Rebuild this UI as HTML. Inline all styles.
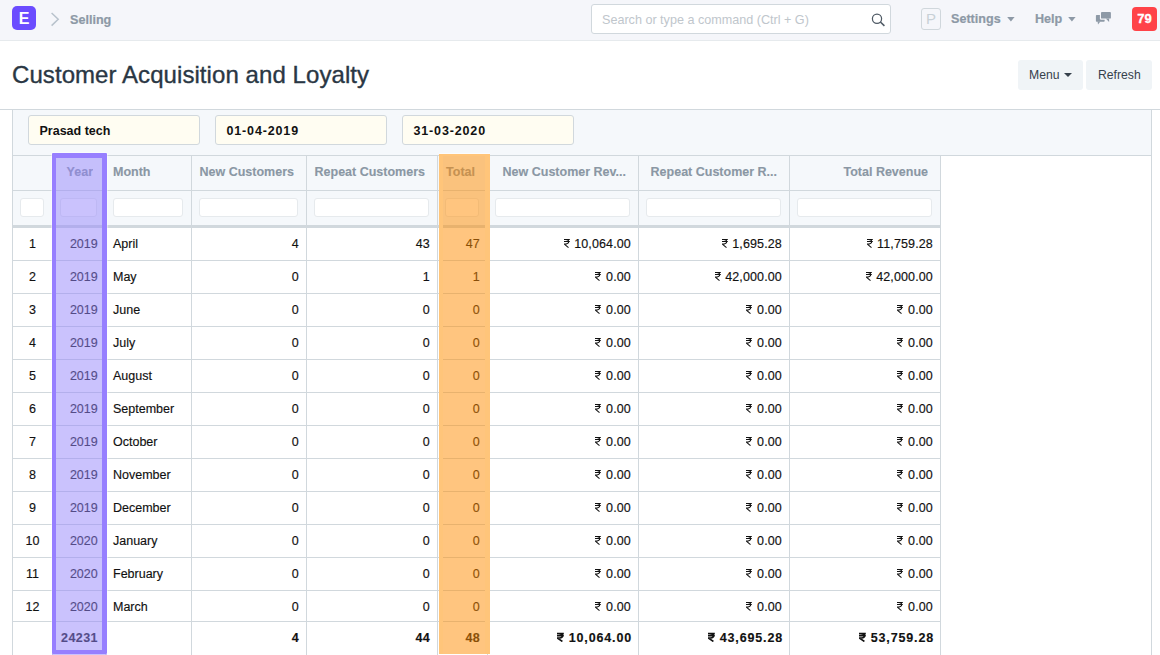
<!DOCTYPE html>
<html><head><meta charset="utf-8">
<style>
*{box-sizing:border-box;margin:0;padding:0}
html,body{width:1160px;height:655px;overflow:hidden;background:#fff;font-family:"Liberation Sans",sans-serif;}
.abs{position:absolute}
#nav{position:absolute;left:0;top:0;width:1160px;height:41px;background:#f5f6fa;border-bottom:1px solid #e6eaed}
#logo{left:12px;top:6px;width:24px;height:24px;border-radius:5px;background:#6b4cff;color:#fff;font-weight:bold;font-size:16px;line-height:25px;text-align:center}
.navtxt{font-weight:bold;font-size:12.6px;color:#8d99a6;white-space:nowrap;-webkit-text-stroke:0.2px #8d99a6}
#search{left:591px;top:4px;width:300px;height:30px;border:1px solid #d1d8dd;border-radius:3px;background:#fff}
#search span{position:absolute;left:10px;top:8px;font-size:12.6px;color:#c0c6cc;white-space:nowrap}
#pav{left:921px;top:8px;width:20px;height:22px;border:1px solid #d0d7dc;border-radius:3px;color:#c8d0d6;font-size:15px;line-height:20px;text-align:center}
#badge{left:1132px;top:7px;width:25px;height:24px;border-radius:4px;background:#ff4348;color:#fff;font-weight:bold;font-size:13px;line-height:23px;text-align:center;-webkit-text-stroke:0.3px #fff}
#title{left:12px;top:61px;font-size:24px;letter-spacing:0px;-webkit-text-stroke:0.35px #2a3744;letter-spacing:0.07px;color:#2a3744;white-space:nowrap;line-height:28px}
.btn{top:60px;height:30px;background:#f0f4f7;border-radius:3px;font-size:12.2px;color:#36414c;line-height:30px;white-space:nowrap}
#hline{left:0;top:109px;width:1160px;height:1px;background:#d1d8dd}
#filt{left:12px;top:110px;width:1140px;height:46px;background:#f5f8fb;border-left:1px solid #d1d8dd;border-right:1px solid #d1d8dd}
.fin{top:115px;width:172px;height:30px;border:1px solid #d1d8dd;border-radius:3px;background:#fffdf2;font-weight:bold;font-size:12.5px;color:#111;padding-left:10.5px;line-height:30px;white-space:nowrap}
#rb{left:1151px;top:110px;width:1px;height:545px;background:#d1d8dd}

.c{position:absolute}
.h{position:absolute;height:34px;line-height:32px;font-weight:bold;font-size:12.5px;color:#8a97a4;white-space:nowrap;overflow:hidden;-webkit-text-stroke:0.12px #8a97a4}
.fi{position:absolute;top:198px;height:19px;background:#fff;border:1px solid #e6eaed;border-radius:3px}
.t{position:absolute;height:32px;line-height:32px;font-size:12.5px;color:#111;white-space:nowrap;-webkit-text-stroke:0.15px currentColor}
.t.b{font-weight:bold}
.ru{display:inline-block;vertical-align:baseline;position:relative;top:0px}
#purp{left:52px;top:153px;width:55px;height:501px;border:5px solid #977fff;border-left-width:4px;border-bottom-width:4px;border-radius:1px;background:rgba(150,133,252,0.5);box-shadow:0 0 0 1px rgba(255,255,255,0.45)}
#purp2{left:52px;top:654px;width:55px;height:2px;background:rgba(150,133,252,0.5)}
#orng{left:439px;top:154px;width:51px;height:500px;border:4px solid #ffc57a;border-right-width:5px;border-top-width:2px;border-bottom:0;background:rgba(255,139,0,0.5);box-shadow:0 -1px 0 0 rgba(255,255,255,0.6)}
</style></head><body>
<div id="nav"></div>
<div id="logo" class="abs">E</div>
<svg class="abs" style="left:50px;top:12px" width="12" height="16" viewBox="0 0 12 16"><path d="M1.6 1 L8.2 7.3 L1.6 13.6" fill="none" stroke="#b8c2cc" stroke-width="1.5"/></svg>
<div class="abs navtxt" style="left:70px;top:13px">Selling</div>
<div id="search" class="abs"><span>Search or type a command (Ctrl + G)</span>
<svg style="position:absolute;left:279px;top:7px" width="16" height="16" viewBox="0 0 16 16"><circle cx="6" cy="6.7" r="4.6" fill="none" stroke="#4f5a65" stroke-width="1.25"/><path d="M9.4 10 L13.4 13.8" stroke="#4f5a65" stroke-width="1.6"/></svg></div>
<div id="pav" class="abs">P</div>
<div class="abs navtxt" style="left:951px;top:12px">Settings</div>
<svg class="abs" style="left:1007px;top:16.5px" width="8" height="5"><path d="M0.2 0 L7.6 0 L3.9 4.4Z" fill="#8d99a6"/></svg>
<div class="abs navtxt" style="left:1035px;top:12px">Help</div>
<svg class="abs" style="left:1068px;top:16.5px" width="8" height="5"><path d="M0.2 0 L7.6 0 L3.9 4.4Z" fill="#8d99a6"/></svg>
<svg class="abs" style="left:1094px;top:10px" width="18" height="16" viewBox="0 0 18 16"><rect x="1.9" y="5" width="8.75" height="6.75" rx="0.8" fill="#8d99a6"/><path d="M3.6 11.5 L6.4 11.5 L4 14.4Z" fill="#8d99a6"/><rect x="5.9" y="0.9" width="12.1" height="8.8" rx="1.2" fill="#f5f6fa"/><path d="M10.8 8.8 L16 8.8 L16 12.8Z" fill="#f5f6fa"/><rect x="7" y="2" width="9.9" height="6.6" rx="0.9" fill="#8d99a6"/><path d="M11.8 8.5 L15.1 8.5 L15.1 11.9Z" fill="#8d99a6"/></svg>
<div id="badge" class="abs">79</div>

<div id="title" class="abs">Customer Acquisition and Loyalty</div>
<div class="abs btn" style="left:1018px;width:65px;padding-left:11px">Menu</div>
<svg class="abs" style="left:1064px;top:73px" width="8" height="4"><path d="M0 0 L8 0 L4 4Z" fill="#36414c"/></svg>
<div class="abs btn" style="left:1086px;width:66px;padding-left:12px">Refresh</div>

<div id="hline" class="abs"></div>
<div id="filt" class="abs"></div>
<div class="abs fin" style="left:28px">Prasad tech</div>
<div class="abs fin" style="left:215px;letter-spacing:0.85px">01-04-2019</div>
<div class="abs fin" style="left:402px;letter-spacing:0.85px">31-03-2020</div>
<div id="rb" class="abs"></div>

<div class="abs" style="left:12px;top:155px;width:1140px;height:1px;background:#d1d8dd"></div>
<div class="abs" style="left:13px;top:156px;width:927px;height:69px;background:#f5f8fb"></div>
<div class="abs" style="left:12px;top:190px;width:928px;height:1px;background:#d1d8dd"></div>
<div class="abs" style="left:12px;top:225px;width:928px;height:3px;background:#d1d8dd"></div>
<div class="abs" style="left:12px;top:156px;width:1px;height:499px;background:#d1d8dd"></div>
<div class="abs" style="left:52px;top:156px;width:1px;height:499px;background:#d1d8dd"></div>
<div class="abs" style="left:105px;top:156px;width:1px;height:499px;background:#d1d8dd"></div>
<div class="abs" style="left:191px;top:156px;width:1px;height:499px;background:#d1d8dd"></div>
<div class="abs" style="left:306px;top:156px;width:1px;height:499px;background:#d1d8dd"></div>
<div class="abs" style="left:437px;top:156px;width:1px;height:499px;background:#d1d8dd"></div>
<div class="abs" style="left:487px;top:156px;width:1px;height:499px;background:#d1d8dd"></div>
<div class="abs" style="left:638px;top:156px;width:1px;height:499px;background:#d1d8dd"></div>
<div class="abs" style="left:789px;top:156px;width:1px;height:499px;background:#d1d8dd"></div>
<div class="abs" style="left:940px;top:156px;width:1px;height:499px;background:#d1d8dd"></div>
<div class="abs" style="left:12px;top:260px;width:928px;height:1px;background:#d1d8dd"></div>
<div class="abs" style="left:12px;top:293px;width:928px;height:1px;background:#d1d8dd"></div>
<div class="abs" style="left:12px;top:326px;width:928px;height:1px;background:#d1d8dd"></div>
<div class="abs" style="left:12px;top:359px;width:928px;height:1px;background:#d1d8dd"></div>
<div class="abs" style="left:12px;top:392px;width:928px;height:1px;background:#d1d8dd"></div>
<div class="abs" style="left:12px;top:425px;width:928px;height:1px;background:#d1d8dd"></div>
<div class="abs" style="left:12px;top:458px;width:928px;height:1px;background:#d1d8dd"></div>
<div class="abs" style="left:12px;top:491px;width:928px;height:1px;background:#d1d8dd"></div>
<div class="abs" style="left:12px;top:524px;width:928px;height:1px;background:#d1d8dd"></div>
<div class="abs" style="left:12px;top:557px;width:928px;height:1px;background:#d1d8dd"></div>
<div class="abs" style="left:12px;top:590px;width:928px;height:1px;background:#d1d8dd"></div>
<div class="abs" style="left:12px;top:621px;width:928px;height:1px;background:#d1d8dd"></div>
<div class="h" style="left:60px;top:156px;width:33px;text-align:right">Year</div>
<div class="h" style="left:113px;top:156px;width:78px;text-align:left">Month</div>
<div class="h" style="left:199px;top:156px;width:95px;text-align:right">New Customers</div>
<div class="h" style="left:314px;top:156px;width:111px;text-align:right">Repeat Customers</div>
<div class="h" style="left:445px;top:156px;width:30px;text-align:right">Total</div>
<div class="h" style="left:495px;top:156px;width:131px;text-align:right">New Customer Rev...</div>
<div class="h" style="left:646px;top:156px;width:131px;text-align:right">Repeat Customer R...</div>
<div class="h" style="left:797px;top:156px;width:131px;text-align:right">Total Revenue</div>
<div class="fi" style="left:20px;width:24px"></div>
<div class="fi" style="left:60px;width:37px"></div>
<div class="fi" style="left:113px;width:70px"></div>
<div class="fi" style="left:199px;width:99px"></div>
<div class="fi" style="left:314px;width:115px"></div>
<div class="fi" style="left:445px;width:34px"></div>
<div class="fi" style="left:495px;width:135px"></div>
<div class="fi" style="left:646px;width:135px"></div>
<div class="fi" style="left:797px;width:135px"></div>
<div class="t" style="left:13px;top:228px;width:39px;text-align:center">1</div>
<div class="t" style="left:60px;top:228px;width:37.7px;text-align:right">2019</div>
<div class="t" style="left:113px;top:228px;width:70px;text-align:left">April</div>
<div class="t" style="left:199px;top:228px;width:99.7px;text-align:right">4</div>
<div class="t" style="left:314px;top:228px;width:115.7px;text-align:right">43</div>
<div class="t" style="left:445px;top:228px;width:34.7px;text-align:right">47</div>
<div class="t" style="left:495px;top:228px;width:135.9px;text-align:right;letter-spacing:0.12px"><svg class="ru" width="7" height="10" viewBox="0 0 7 10"><path d="M0 1.5H5.8M0 3.5H5.8M1.8 1.5Q4.7 1.5 4.7 3.8Q4.7 6.1 0.3 6.1L4.5 9.6" fill="none" stroke="currentColor" stroke-width="1.05"/></svg>&nbsp;10,064.00</div>
<div class="t" style="left:646px;top:228px;width:135.9px;text-align:right;letter-spacing:0.12px"><svg class="ru" width="7" height="10" viewBox="0 0 7 10"><path d="M0 1.5H5.8M0 3.5H5.8M1.8 1.5Q4.7 1.5 4.7 3.8Q4.7 6.1 0.3 6.1L4.5 9.6" fill="none" stroke="currentColor" stroke-width="1.05"/></svg>&nbsp;1,695.28</div>
<div class="t" style="left:797px;top:228px;width:135.9px;text-align:right;letter-spacing:0.12px"><svg class="ru" width="7" height="10" viewBox="0 0 7 10"><path d="M0 1.5H5.8M0 3.5H5.8M1.8 1.5Q4.7 1.5 4.7 3.8Q4.7 6.1 0.3 6.1L4.5 9.6" fill="none" stroke="currentColor" stroke-width="1.05"/></svg>&nbsp;11,759.28</div>
<div class="t" style="left:13px;top:261px;width:39px;text-align:center">2</div>
<div class="t" style="left:60px;top:261px;width:37.7px;text-align:right">2019</div>
<div class="t" style="left:113px;top:261px;width:70px;text-align:left">May</div>
<div class="t" style="left:199px;top:261px;width:99.7px;text-align:right">0</div>
<div class="t" style="left:314px;top:261px;width:115.7px;text-align:right">1</div>
<div class="t" style="left:445px;top:261px;width:34.7px;text-align:right">1</div>
<div class="t" style="left:495px;top:261px;width:135.9px;text-align:right;letter-spacing:0.12px"><svg class="ru" width="7" height="10" viewBox="0 0 7 10"><path d="M0 1.5H5.8M0 3.5H5.8M1.8 1.5Q4.7 1.5 4.7 3.8Q4.7 6.1 0.3 6.1L4.5 9.6" fill="none" stroke="currentColor" stroke-width="1.05"/></svg>&nbsp;0.00</div>
<div class="t" style="left:646px;top:261px;width:135.9px;text-align:right;letter-spacing:0.12px"><svg class="ru" width="7" height="10" viewBox="0 0 7 10"><path d="M0 1.5H5.8M0 3.5H5.8M1.8 1.5Q4.7 1.5 4.7 3.8Q4.7 6.1 0.3 6.1L4.5 9.6" fill="none" stroke="currentColor" stroke-width="1.05"/></svg>&nbsp;42,000.00</div>
<div class="t" style="left:797px;top:261px;width:135.9px;text-align:right;letter-spacing:0.12px"><svg class="ru" width="7" height="10" viewBox="0 0 7 10"><path d="M0 1.5H5.8M0 3.5H5.8M1.8 1.5Q4.7 1.5 4.7 3.8Q4.7 6.1 0.3 6.1L4.5 9.6" fill="none" stroke="currentColor" stroke-width="1.05"/></svg>&nbsp;42,000.00</div>
<div class="t" style="left:13px;top:294px;width:39px;text-align:center">3</div>
<div class="t" style="left:60px;top:294px;width:37.7px;text-align:right">2019</div>
<div class="t" style="left:113px;top:294px;width:70px;text-align:left">June</div>
<div class="t" style="left:199px;top:294px;width:99.7px;text-align:right">0</div>
<div class="t" style="left:314px;top:294px;width:115.7px;text-align:right">0</div>
<div class="t" style="left:445px;top:294px;width:34.7px;text-align:right">0</div>
<div class="t" style="left:495px;top:294px;width:135.9px;text-align:right;letter-spacing:0.12px"><svg class="ru" width="7" height="10" viewBox="0 0 7 10"><path d="M0 1.5H5.8M0 3.5H5.8M1.8 1.5Q4.7 1.5 4.7 3.8Q4.7 6.1 0.3 6.1L4.5 9.6" fill="none" stroke="currentColor" stroke-width="1.05"/></svg>&nbsp;0.00</div>
<div class="t" style="left:646px;top:294px;width:135.9px;text-align:right;letter-spacing:0.12px"><svg class="ru" width="7" height="10" viewBox="0 0 7 10"><path d="M0 1.5H5.8M0 3.5H5.8M1.8 1.5Q4.7 1.5 4.7 3.8Q4.7 6.1 0.3 6.1L4.5 9.6" fill="none" stroke="currentColor" stroke-width="1.05"/></svg>&nbsp;0.00</div>
<div class="t" style="left:797px;top:294px;width:135.9px;text-align:right;letter-spacing:0.12px"><svg class="ru" width="7" height="10" viewBox="0 0 7 10"><path d="M0 1.5H5.8M0 3.5H5.8M1.8 1.5Q4.7 1.5 4.7 3.8Q4.7 6.1 0.3 6.1L4.5 9.6" fill="none" stroke="currentColor" stroke-width="1.05"/></svg>&nbsp;0.00</div>
<div class="t" style="left:13px;top:327px;width:39px;text-align:center">4</div>
<div class="t" style="left:60px;top:327px;width:37.7px;text-align:right">2019</div>
<div class="t" style="left:113px;top:327px;width:70px;text-align:left">July</div>
<div class="t" style="left:199px;top:327px;width:99.7px;text-align:right">0</div>
<div class="t" style="left:314px;top:327px;width:115.7px;text-align:right">0</div>
<div class="t" style="left:445px;top:327px;width:34.7px;text-align:right">0</div>
<div class="t" style="left:495px;top:327px;width:135.9px;text-align:right;letter-spacing:0.12px"><svg class="ru" width="7" height="10" viewBox="0 0 7 10"><path d="M0 1.5H5.8M0 3.5H5.8M1.8 1.5Q4.7 1.5 4.7 3.8Q4.7 6.1 0.3 6.1L4.5 9.6" fill="none" stroke="currentColor" stroke-width="1.05"/></svg>&nbsp;0.00</div>
<div class="t" style="left:646px;top:327px;width:135.9px;text-align:right;letter-spacing:0.12px"><svg class="ru" width="7" height="10" viewBox="0 0 7 10"><path d="M0 1.5H5.8M0 3.5H5.8M1.8 1.5Q4.7 1.5 4.7 3.8Q4.7 6.1 0.3 6.1L4.5 9.6" fill="none" stroke="currentColor" stroke-width="1.05"/></svg>&nbsp;0.00</div>
<div class="t" style="left:797px;top:327px;width:135.9px;text-align:right;letter-spacing:0.12px"><svg class="ru" width="7" height="10" viewBox="0 0 7 10"><path d="M0 1.5H5.8M0 3.5H5.8M1.8 1.5Q4.7 1.5 4.7 3.8Q4.7 6.1 0.3 6.1L4.5 9.6" fill="none" stroke="currentColor" stroke-width="1.05"/></svg>&nbsp;0.00</div>
<div class="t" style="left:13px;top:360px;width:39px;text-align:center">5</div>
<div class="t" style="left:60px;top:360px;width:37.7px;text-align:right">2019</div>
<div class="t" style="left:113px;top:360px;width:70px;text-align:left">August</div>
<div class="t" style="left:199px;top:360px;width:99.7px;text-align:right">0</div>
<div class="t" style="left:314px;top:360px;width:115.7px;text-align:right">0</div>
<div class="t" style="left:445px;top:360px;width:34.7px;text-align:right">0</div>
<div class="t" style="left:495px;top:360px;width:135.9px;text-align:right;letter-spacing:0.12px"><svg class="ru" width="7" height="10" viewBox="0 0 7 10"><path d="M0 1.5H5.8M0 3.5H5.8M1.8 1.5Q4.7 1.5 4.7 3.8Q4.7 6.1 0.3 6.1L4.5 9.6" fill="none" stroke="currentColor" stroke-width="1.05"/></svg>&nbsp;0.00</div>
<div class="t" style="left:646px;top:360px;width:135.9px;text-align:right;letter-spacing:0.12px"><svg class="ru" width="7" height="10" viewBox="0 0 7 10"><path d="M0 1.5H5.8M0 3.5H5.8M1.8 1.5Q4.7 1.5 4.7 3.8Q4.7 6.1 0.3 6.1L4.5 9.6" fill="none" stroke="currentColor" stroke-width="1.05"/></svg>&nbsp;0.00</div>
<div class="t" style="left:797px;top:360px;width:135.9px;text-align:right;letter-spacing:0.12px"><svg class="ru" width="7" height="10" viewBox="0 0 7 10"><path d="M0 1.5H5.8M0 3.5H5.8M1.8 1.5Q4.7 1.5 4.7 3.8Q4.7 6.1 0.3 6.1L4.5 9.6" fill="none" stroke="currentColor" stroke-width="1.05"/></svg>&nbsp;0.00</div>
<div class="t" style="left:13px;top:393px;width:39px;text-align:center">6</div>
<div class="t" style="left:60px;top:393px;width:37.7px;text-align:right">2019</div>
<div class="t" style="left:113px;top:393px;width:70px;text-align:left">September</div>
<div class="t" style="left:199px;top:393px;width:99.7px;text-align:right">0</div>
<div class="t" style="left:314px;top:393px;width:115.7px;text-align:right">0</div>
<div class="t" style="left:445px;top:393px;width:34.7px;text-align:right">0</div>
<div class="t" style="left:495px;top:393px;width:135.9px;text-align:right;letter-spacing:0.12px"><svg class="ru" width="7" height="10" viewBox="0 0 7 10"><path d="M0 1.5H5.8M0 3.5H5.8M1.8 1.5Q4.7 1.5 4.7 3.8Q4.7 6.1 0.3 6.1L4.5 9.6" fill="none" stroke="currentColor" stroke-width="1.05"/></svg>&nbsp;0.00</div>
<div class="t" style="left:646px;top:393px;width:135.9px;text-align:right;letter-spacing:0.12px"><svg class="ru" width="7" height="10" viewBox="0 0 7 10"><path d="M0 1.5H5.8M0 3.5H5.8M1.8 1.5Q4.7 1.5 4.7 3.8Q4.7 6.1 0.3 6.1L4.5 9.6" fill="none" stroke="currentColor" stroke-width="1.05"/></svg>&nbsp;0.00</div>
<div class="t" style="left:797px;top:393px;width:135.9px;text-align:right;letter-spacing:0.12px"><svg class="ru" width="7" height="10" viewBox="0 0 7 10"><path d="M0 1.5H5.8M0 3.5H5.8M1.8 1.5Q4.7 1.5 4.7 3.8Q4.7 6.1 0.3 6.1L4.5 9.6" fill="none" stroke="currentColor" stroke-width="1.05"/></svg>&nbsp;0.00</div>
<div class="t" style="left:13px;top:426px;width:39px;text-align:center">7</div>
<div class="t" style="left:60px;top:426px;width:37.7px;text-align:right">2019</div>
<div class="t" style="left:113px;top:426px;width:70px;text-align:left">October</div>
<div class="t" style="left:199px;top:426px;width:99.7px;text-align:right">0</div>
<div class="t" style="left:314px;top:426px;width:115.7px;text-align:right">0</div>
<div class="t" style="left:445px;top:426px;width:34.7px;text-align:right">0</div>
<div class="t" style="left:495px;top:426px;width:135.9px;text-align:right;letter-spacing:0.12px"><svg class="ru" width="7" height="10" viewBox="0 0 7 10"><path d="M0 1.5H5.8M0 3.5H5.8M1.8 1.5Q4.7 1.5 4.7 3.8Q4.7 6.1 0.3 6.1L4.5 9.6" fill="none" stroke="currentColor" stroke-width="1.05"/></svg>&nbsp;0.00</div>
<div class="t" style="left:646px;top:426px;width:135.9px;text-align:right;letter-spacing:0.12px"><svg class="ru" width="7" height="10" viewBox="0 0 7 10"><path d="M0 1.5H5.8M0 3.5H5.8M1.8 1.5Q4.7 1.5 4.7 3.8Q4.7 6.1 0.3 6.1L4.5 9.6" fill="none" stroke="currentColor" stroke-width="1.05"/></svg>&nbsp;0.00</div>
<div class="t" style="left:797px;top:426px;width:135.9px;text-align:right;letter-spacing:0.12px"><svg class="ru" width="7" height="10" viewBox="0 0 7 10"><path d="M0 1.5H5.8M0 3.5H5.8M1.8 1.5Q4.7 1.5 4.7 3.8Q4.7 6.1 0.3 6.1L4.5 9.6" fill="none" stroke="currentColor" stroke-width="1.05"/></svg>&nbsp;0.00</div>
<div class="t" style="left:13px;top:459px;width:39px;text-align:center">8</div>
<div class="t" style="left:60px;top:459px;width:37.7px;text-align:right">2019</div>
<div class="t" style="left:113px;top:459px;width:70px;text-align:left">November</div>
<div class="t" style="left:199px;top:459px;width:99.7px;text-align:right">0</div>
<div class="t" style="left:314px;top:459px;width:115.7px;text-align:right">0</div>
<div class="t" style="left:445px;top:459px;width:34.7px;text-align:right">0</div>
<div class="t" style="left:495px;top:459px;width:135.9px;text-align:right;letter-spacing:0.12px"><svg class="ru" width="7" height="10" viewBox="0 0 7 10"><path d="M0 1.5H5.8M0 3.5H5.8M1.8 1.5Q4.7 1.5 4.7 3.8Q4.7 6.1 0.3 6.1L4.5 9.6" fill="none" stroke="currentColor" stroke-width="1.05"/></svg>&nbsp;0.00</div>
<div class="t" style="left:646px;top:459px;width:135.9px;text-align:right;letter-spacing:0.12px"><svg class="ru" width="7" height="10" viewBox="0 0 7 10"><path d="M0 1.5H5.8M0 3.5H5.8M1.8 1.5Q4.7 1.5 4.7 3.8Q4.7 6.1 0.3 6.1L4.5 9.6" fill="none" stroke="currentColor" stroke-width="1.05"/></svg>&nbsp;0.00</div>
<div class="t" style="left:797px;top:459px;width:135.9px;text-align:right;letter-spacing:0.12px"><svg class="ru" width="7" height="10" viewBox="0 0 7 10"><path d="M0 1.5H5.8M0 3.5H5.8M1.8 1.5Q4.7 1.5 4.7 3.8Q4.7 6.1 0.3 6.1L4.5 9.6" fill="none" stroke="currentColor" stroke-width="1.05"/></svg>&nbsp;0.00</div>
<div class="t" style="left:13px;top:492px;width:39px;text-align:center">9</div>
<div class="t" style="left:60px;top:492px;width:37.7px;text-align:right">2019</div>
<div class="t" style="left:113px;top:492px;width:70px;text-align:left">December</div>
<div class="t" style="left:199px;top:492px;width:99.7px;text-align:right">0</div>
<div class="t" style="left:314px;top:492px;width:115.7px;text-align:right">0</div>
<div class="t" style="left:445px;top:492px;width:34.7px;text-align:right">0</div>
<div class="t" style="left:495px;top:492px;width:135.9px;text-align:right;letter-spacing:0.12px"><svg class="ru" width="7" height="10" viewBox="0 0 7 10"><path d="M0 1.5H5.8M0 3.5H5.8M1.8 1.5Q4.7 1.5 4.7 3.8Q4.7 6.1 0.3 6.1L4.5 9.6" fill="none" stroke="currentColor" stroke-width="1.05"/></svg>&nbsp;0.00</div>
<div class="t" style="left:646px;top:492px;width:135.9px;text-align:right;letter-spacing:0.12px"><svg class="ru" width="7" height="10" viewBox="0 0 7 10"><path d="M0 1.5H5.8M0 3.5H5.8M1.8 1.5Q4.7 1.5 4.7 3.8Q4.7 6.1 0.3 6.1L4.5 9.6" fill="none" stroke="currentColor" stroke-width="1.05"/></svg>&nbsp;0.00</div>
<div class="t" style="left:797px;top:492px;width:135.9px;text-align:right;letter-spacing:0.12px"><svg class="ru" width="7" height="10" viewBox="0 0 7 10"><path d="M0 1.5H5.8M0 3.5H5.8M1.8 1.5Q4.7 1.5 4.7 3.8Q4.7 6.1 0.3 6.1L4.5 9.6" fill="none" stroke="currentColor" stroke-width="1.05"/></svg>&nbsp;0.00</div>
<div class="t" style="left:13px;top:525px;width:39px;text-align:center">10</div>
<div class="t" style="left:60px;top:525px;width:37.7px;text-align:right">2020</div>
<div class="t" style="left:113px;top:525px;width:70px;text-align:left">January</div>
<div class="t" style="left:199px;top:525px;width:99.7px;text-align:right">0</div>
<div class="t" style="left:314px;top:525px;width:115.7px;text-align:right">0</div>
<div class="t" style="left:445px;top:525px;width:34.7px;text-align:right">0</div>
<div class="t" style="left:495px;top:525px;width:135.9px;text-align:right;letter-spacing:0.12px"><svg class="ru" width="7" height="10" viewBox="0 0 7 10"><path d="M0 1.5H5.8M0 3.5H5.8M1.8 1.5Q4.7 1.5 4.7 3.8Q4.7 6.1 0.3 6.1L4.5 9.6" fill="none" stroke="currentColor" stroke-width="1.05"/></svg>&nbsp;0.00</div>
<div class="t" style="left:646px;top:525px;width:135.9px;text-align:right;letter-spacing:0.12px"><svg class="ru" width="7" height="10" viewBox="0 0 7 10"><path d="M0 1.5H5.8M0 3.5H5.8M1.8 1.5Q4.7 1.5 4.7 3.8Q4.7 6.1 0.3 6.1L4.5 9.6" fill="none" stroke="currentColor" stroke-width="1.05"/></svg>&nbsp;0.00</div>
<div class="t" style="left:797px;top:525px;width:135.9px;text-align:right;letter-spacing:0.12px"><svg class="ru" width="7" height="10" viewBox="0 0 7 10"><path d="M0 1.5H5.8M0 3.5H5.8M1.8 1.5Q4.7 1.5 4.7 3.8Q4.7 6.1 0.3 6.1L4.5 9.6" fill="none" stroke="currentColor" stroke-width="1.05"/></svg>&nbsp;0.00</div>
<div class="t" style="left:13px;top:558px;width:39px;text-align:center">11</div>
<div class="t" style="left:60px;top:558px;width:37.7px;text-align:right">2020</div>
<div class="t" style="left:113px;top:558px;width:70px;text-align:left">February</div>
<div class="t" style="left:199px;top:558px;width:99.7px;text-align:right">0</div>
<div class="t" style="left:314px;top:558px;width:115.7px;text-align:right">0</div>
<div class="t" style="left:445px;top:558px;width:34.7px;text-align:right">0</div>
<div class="t" style="left:495px;top:558px;width:135.9px;text-align:right;letter-spacing:0.12px"><svg class="ru" width="7" height="10" viewBox="0 0 7 10"><path d="M0 1.5H5.8M0 3.5H5.8M1.8 1.5Q4.7 1.5 4.7 3.8Q4.7 6.1 0.3 6.1L4.5 9.6" fill="none" stroke="currentColor" stroke-width="1.05"/></svg>&nbsp;0.00</div>
<div class="t" style="left:646px;top:558px;width:135.9px;text-align:right;letter-spacing:0.12px"><svg class="ru" width="7" height="10" viewBox="0 0 7 10"><path d="M0 1.5H5.8M0 3.5H5.8M1.8 1.5Q4.7 1.5 4.7 3.8Q4.7 6.1 0.3 6.1L4.5 9.6" fill="none" stroke="currentColor" stroke-width="1.05"/></svg>&nbsp;0.00</div>
<div class="t" style="left:797px;top:558px;width:135.9px;text-align:right;letter-spacing:0.12px"><svg class="ru" width="7" height="10" viewBox="0 0 7 10"><path d="M0 1.5H5.8M0 3.5H5.8M1.8 1.5Q4.7 1.5 4.7 3.8Q4.7 6.1 0.3 6.1L4.5 9.6" fill="none" stroke="currentColor" stroke-width="1.05"/></svg>&nbsp;0.00</div>
<div class="t" style="left:13px;top:591px;width:39px;text-align:center">12</div>
<div class="t" style="left:60px;top:591px;width:37.7px;text-align:right">2020</div>
<div class="t" style="left:113px;top:591px;width:70px;text-align:left">March</div>
<div class="t" style="left:199px;top:591px;width:99.7px;text-align:right">0</div>
<div class="t" style="left:314px;top:591px;width:115.7px;text-align:right">0</div>
<div class="t" style="left:445px;top:591px;width:34.7px;text-align:right">0</div>
<div class="t" style="left:495px;top:591px;width:135.9px;text-align:right;letter-spacing:0.12px"><svg class="ru" width="7" height="10" viewBox="0 0 7 10"><path d="M0 1.5H5.8M0 3.5H5.8M1.8 1.5Q4.7 1.5 4.7 3.8Q4.7 6.1 0.3 6.1L4.5 9.6" fill="none" stroke="currentColor" stroke-width="1.05"/></svg>&nbsp;0.00</div>
<div class="t" style="left:646px;top:591px;width:135.9px;text-align:right;letter-spacing:0.12px"><svg class="ru" width="7" height="10" viewBox="0 0 7 10"><path d="M0 1.5H5.8M0 3.5H5.8M1.8 1.5Q4.7 1.5 4.7 3.8Q4.7 6.1 0.3 6.1L4.5 9.6" fill="none" stroke="currentColor" stroke-width="1.05"/></svg>&nbsp;0.00</div>
<div class="t" style="left:797px;top:591px;width:135.9px;text-align:right;letter-spacing:0.12px"><svg class="ru" width="7" height="10" viewBox="0 0 7 10"><path d="M0 1.5H5.8M0 3.5H5.8M1.8 1.5Q4.7 1.5 4.7 3.8Q4.7 6.1 0.3 6.1L4.5 9.6" fill="none" stroke="currentColor" stroke-width="1.05"/></svg>&nbsp;0.00</div>
<div class="t b" style="left:60px;top:622px;width:38px;text-align:right;letter-spacing:0.45px">24231</div>
<div class="t b" style="left:199px;top:622px;width:100px;text-align:right;letter-spacing:0.3px">4</div>
<div class="t b" style="left:314px;top:622px;width:116px;text-align:right;letter-spacing:0.3px">44</div>
<div class="t b" style="left:445px;top:622px;width:35px;text-align:right;letter-spacing:0.3px">48</div>
<div class="t b" style="left:495px;top:622px;width:137px;text-align:right;letter-spacing:0.85px"><svg class="ru" width="7" height="10" viewBox="0 0 7 10"><path d="M0 1.6H6.8M0 3.8H6.8M1.8 1.6Q5.6 1.6 5.6 3.9Q5.6 6.1 0.5 6.1L5.4 9.5" fill="none" stroke="currentColor" stroke-width="1.6"/></svg>&nbsp;10,064.00</div>
<div class="t b" style="left:646px;top:622px;width:137px;text-align:right;letter-spacing:0.85px"><svg class="ru" width="7" height="10" viewBox="0 0 7 10"><path d="M0 1.6H6.8M0 3.8H6.8M1.8 1.6Q5.6 1.6 5.6 3.9Q5.6 6.1 0.5 6.1L5.4 9.5" fill="none" stroke="currentColor" stroke-width="1.6"/></svg>&nbsp;43,695.28</div>
<div class="t b" style="left:797px;top:622px;width:137px;text-align:right;letter-spacing:0.85px"><svg class="ru" width="7" height="10" viewBox="0 0 7 10"><path d="M0 1.6H6.8M0 3.8H6.8M1.8 1.6Q5.6 1.6 5.6 3.9Q5.6 6.1 0.5 6.1L5.4 9.5" fill="none" stroke="currentColor" stroke-width="1.6"/></svg>&nbsp;53,759.28</div>
<div class="abs" id="purp"></div><div class="abs" id="purp2"></div>
<div class="abs" id="orng"></div>
</body></html>
